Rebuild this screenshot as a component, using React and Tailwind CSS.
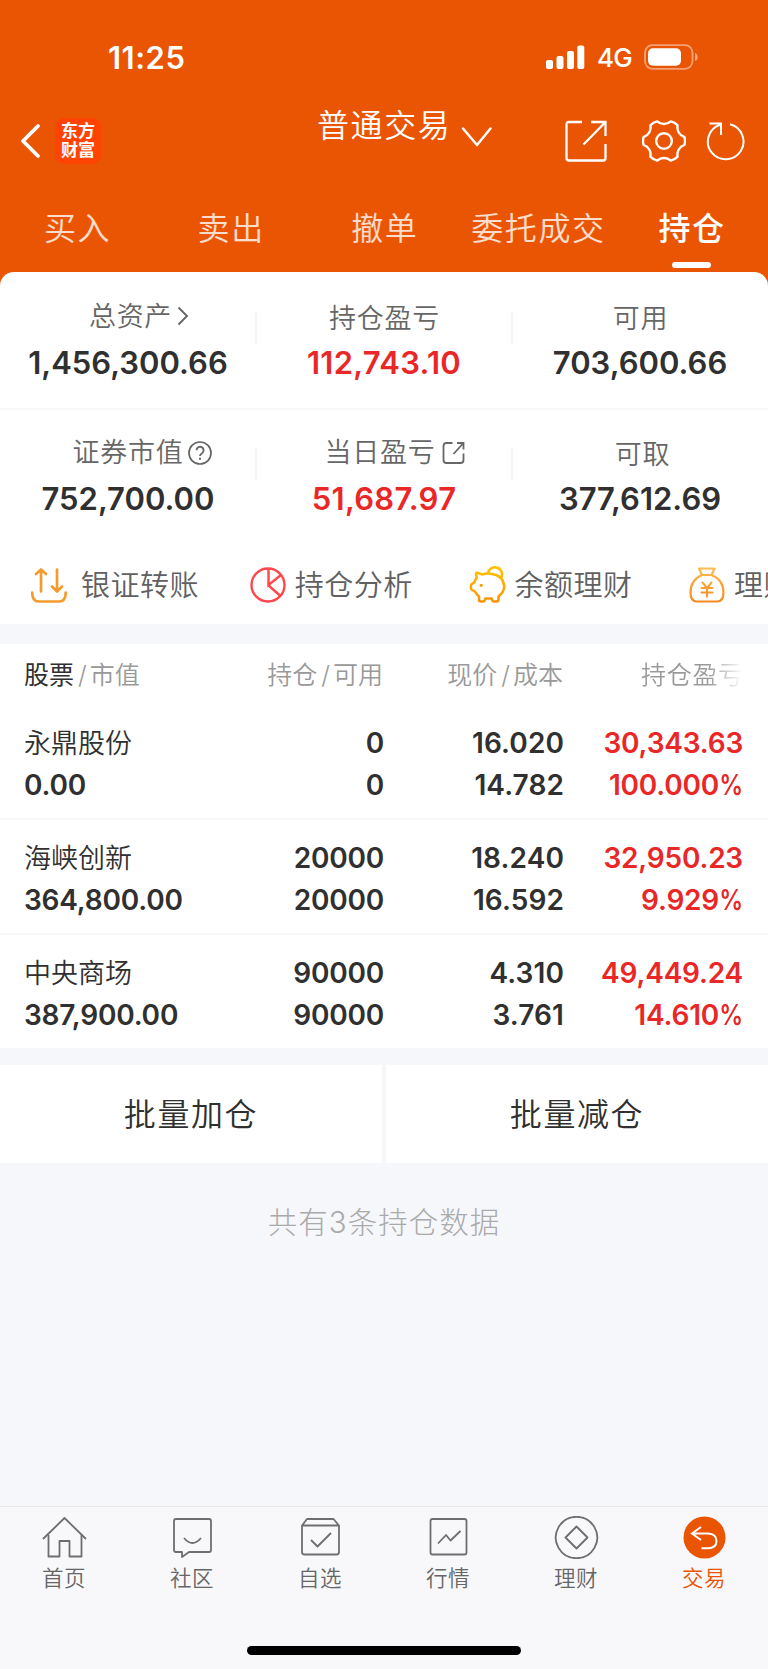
import React from 'react';
import clsx from 'clsx';

const tabs = ['买入', '卖出', '撤单', '委托成交', '持仓'];

const holdings = [
    { name: '永鼎股份', value: '0.00', amount: '0', available: '0', price: '16.020', cost: '14.782', profit: '30,343.63', rate: '100.000' },
    { name: '海峡创新', value: '364,800.00', amount: '20000', available: '20000', price: '18.240', cost: '16.592', profit: '32,950.23', rate: '9.929' },
    { name: '中央商场', value: '387,900.00', amount: '90000', available: '90000', price: '4.310', cost: '3.761', profit: '49,449.24', rate: '14.610' },
];

// Six-tooth gear outline around the origin
const gearPath = (() => {
    const at = (r, deg) => {
        const a = (deg * Math.PI) / 180;
        return `${(r * Math.cos(a)).toFixed(2)} ${(r * Math.sin(a)).toFixed(2)}`;
    };
    let d = `M${at(20.8, -11)}`;
    for (let a = 0; a < 360; a += 60) {
        d += `Q${at(21.6, a)} ${at(20.8, a + 11)}C${at(16.4, a + 20)} ${at(16.4, a + 40)} ${at(20.8, a + 49)}`;
    }
    return `${d}Z`;
})();

const StatusBar = () => (
    <div className="flex h-[114px] items-center pl-[108px] pr-[69px] text-white">
        <span className="text-[31px] leading-none font-semibold tracking-[0.5px]">11:25</span>
        <svg className="ml-auto" width="39" height="24" viewBox="0 0 39 24" fill="currentColor">
            <rect x="0" y="15" width="7" height="9" rx="2" />
            <rect x="10.5" y="11" width="7" height="13" rx="2" />
            <rect x="21" y="6" width="7" height="18" rx="2" />
            <rect x="31.3" y="0.5" width="7" height="23.5" rx="2" />
        </svg>
        <span className="mt-[2px] ml-[12px] w-[35px] text-[26px] leading-none font-[450] tracking-[-0.8px]">4G</span>
        <svg className="ml-[12px]" width="55" height="26" viewBox="0 0 55 26" fill="none">
            <rect x="1" y="1.2" width="47.5" height="23.6" rx="7.5" stroke="#fff" strokeOpacity="0.45" strokeWidth="1.8" />
            <rect x="4" y="4.3" width="33" height="17.4" rx="5" fill="#fff" />
            <path d="M51 9c3.5 1 3.5 7 0 8z" fill="#fff" fillOpacity="0.5" />
        </svg>
    </div>
);

const TitleBar = () => (
    <div className="flex h-[54px] items-center pl-[20px] pr-[22px] text-white">
        <svg width="21" height="36" viewBox="0 0 21 36" fill="none" stroke="currentColor" strokeWidth="3.8" strokeLinecap="round" strokeLinejoin="round">
            <path d="M18 3 3 18l15 15" />
        </svg>
        <div className="ml-[14px] flex h-[46px] w-[46px] flex-col items-center justify-center rounded-[9px] bg-[#ff4305] text-[17px] leading-[19px] font-bold">
            <span>东方</span>
            <span>财富</span>
        </div>
        <div className="ml-[216px] flex items-start self-start">
            <span className="mt-px text-[32px] leading-[21px] font-[350] tracking-[1.6px] whitespace-nowrap">普通交易</span>
            <svg className="mt-[12px] ml-[10px]" width="32" height="22" viewBox="0 0 32 22" fill="none" stroke="currentColor" strokeWidth="2.5" strokeLinecap="round" strokeLinejoin="round">
                <path d="m2 2.5 14 16.5L29.5 2.5" />
            </svg>
        </div>
        <svg className="ml-auto" width="42" height="44" viewBox="0 0 42 44" fill="none" stroke="currentColor" strokeWidth="2.3">
            <path d="M17 3H4Q1.5 3 1.5 5.500v33.500q0 2.500 2.500 2.500h34.500q2 0 2-2.500V25" />
            <path d="M26 3h14.500v14M40 3.500 18.500 25.500" />
        </svg>
        <svg className="ml-[35px]" width="44" height="44" viewBox="-22 -22 44 44" fill="none" stroke="currentColor" strokeWidth="2.400" strokeLinejoin="round">
            <path d={gearPath} />
            <circle r="7.800" />
        </svg>
        <svg className="ml-[20px]" width="40" height="42" viewBox="0 0 40 42" fill="none" stroke="currentColor" strokeWidth="2">
            <path d="M24 4.300A17.800 17.800 0 1 1 14 4.700M3.500 3.500h11.500v11.500" />
        </svg>
    </div>
);

const TabBar = () => (
    <div className="grid h-[104px] grid-cols-5 pt-[41px] text-center">
        {tabs.map((tab, i) => {
            const active = i === tabs.length - 1;
            return (
                <div key={tab} className="flex flex-col items-center">
                    <span className={clsx('-mr-[1.6px] text-[32px] leading-[40px] tracking-[1.6px] whitespace-nowrap', active ? 'font-medium text-white' : 'font-[350] text-white/80')}>
                        {tab}
                    </span>
                    {active && <span className="mt-[13px] h-[6px] w-[39px] rounded-full bg-white" />}
                </div>
            );
        })}
    </div>
);

const Metric = ({ label, icon, value, className, red }) => (
    <div className="flex flex-1 flex-col items-center">
        <div className={clsx('flex h-[45px] items-start gap-[5px] text-[27px] leading-[34px] font-[350] tracking-[0.7px] text-[#666]', className)}>
            <span>{label}</span>
            {icon}
        </div>
        <span className={clsx('text-[31px] leading-[36px] font-semibold', red ? 'tracking-[0.3px] text-[#e92727]' : 'text-[#303030]')}>{value}</span>
    </div>
);

const Summary = () => (
    <div>
        <div className="flex h-[138px] border-b-2 border-[#f7f7f9] pt-[28px]">
            <Metric
                label="总资产"
                value="1,456,300.66"
                className="pl-[22px]"
                icon={
                    <svg className="mt-[6px]" width="12" height="20" viewBox="0 0 12 20" fill="none" stroke="currentColor" strokeWidth="1.900">
                        <path d="m1.500 1.500 8.500 8.500-8.500 8.500" />
                    </svg>
                }
            />
            <div className="-mx-px mt-[11px] h-[34px] w-[2px] bg-[#f6f6f8]" />
            <Metric label="持仓盈亏" value="112,743.10" red className="pt-[2px] pl-px" />
            <div className="-mx-px mt-[11px] h-[34px] w-[2px] bg-[#f6f6f8]" />
            <Metric label="可用" value="703,600.66" className="pt-[2px] pl-px" />
        </div>
        <div className="flex h-[135px] pt-[27px]">
            <Metric
                label="证券市值"
                value="752,700.00"
                className="-mt-px pl-[29px]"
                icon={
                    <svg className="mt-[5px]" width="24" height="24" viewBox="0 0 24 24" fill="none" stroke="currentColor" strokeWidth="1.700">
                        <circle cx="12" cy="12" r="11" />
                        <path d="M8.600 9.300a3.500 3.500 0 1 1 5.400 2.900c-1.300.8-2 1.400-2 2.800M12 16.800v2" strokeWidth="1.900" />
                    </svg>
                }
            />
            <div className="-mx-px mt-[11px] h-[33px] w-[2px] bg-[#f6f6f8]" />
            <Metric
                label="当日盈亏"
                value="51,687.97"
                red
                className="-mt-px pl-[23px]"
                icon={
                    <svg className="mt-[5px] ml-[2px]" width="24" height="24" viewBox="0 0 24 24" fill="none" stroke="currentColor" strokeWidth="1.800">
                        <path d="M10.500 2H4.500Q1.500 2 1.500 5v14q0 3 3 3h14q3 0 3-3v-6.500" />
                        <path d="M15 2h6.500v6.500M21 2.500 11.500 13" />
                    </svg>
                }
            />
            <div className="-mx-px mt-[11px] h-[33px] w-[2px] bg-[#f6f6f8]" />
            <Metric label="可取" value="377,612.69" className="-mt-px pt-[2px] pl-[5px]" />
        </div>
    </div>
);

const TransferIcon = () => (
    <svg className="mr-[14px]" width="38" height="38" viewBox="0 0 38 38" fill="none" stroke="#f39c2d" strokeWidth="2.700" strokeLinecap="round" strokeLinejoin="round">
        <path d="M12 25.500V3.500M7 8l5-4.500L17 8M28 3.500v22M23 20.500l5 5 5-5" />
        <path d="M3.200 26.500q0 9 6.500 9h20.500q6.500 0 6.500-9" />
    </svg>
);

const PieIcon = () => (
    <svg className="mr-[8px]" width="38" height="38" viewBox="0 0 38 38" fill="none" stroke="#ff474c" strokeWidth="2.400">
        <circle cx="19" cy="19" r="16.500" />
        <path d="M19.500 2.500V19L32 9M19 19l12.500 11" />
    </svg>
);

const PigIcon = () => (
    <svg className="mr-[8px]" width="38" height="38" viewBox="0 0 38 38" fill="none" stroke="url(#pig)" strokeWidth="2.500" strokeLinejoin="round">
        <defs>
            <linearGradient id="pig" x1="0" y1="0" x2="0" y2="38" gradientUnits="userSpaceOnUse">
                <stop stopColor="#ffc400" />
                <stop offset="1" stopColor="#f99000" />
            </linearGradient>
        </defs>
        <path d="M14.500 8.500 9 6.800Q7.700 6.500 8 8L8.700 12Q7 14 6.200 16.500L4 17.800Q3 18.300 3 19.300v3q0 1.200 1 1.700L7 25.500Q8.500 28.500 11 30.500V33.500q0 2 2 2h2q1.500 0 2-2l.3-1h6.400l.3 1q.5 2 2 2h2.500q2 0 2-2v-3Q36.200 26 36.200 20.500 35.500 9.500 23 7.700 17.500 7 14.500 8.500Z" />
        <path d="M20 7.600a7 7 0 1 1 12.700 4.700" />
        <circle cx="13.200" cy="19.300" r="1.600" fill="#f99f00" stroke="none" />
    </svg>
);

const MoneyBagIcon = () => (
    <svg className="mr-[8px]" width="38" height="38" viewBox="0 0 38 38" fill="none" stroke="url(#bag)" strokeWidth="2.200" strokeLinecap="round" strokeLinejoin="round">
        <defs>
            <linearGradient id="bag" x1="0" y1="0" x2="0" y2="38" gradientUnits="userSpaceOnUse">
                <stop stopColor="#ffbf55" />
                <stop offset="1" stopColor="#f5851c" />
            </linearGradient>
        </defs>
        <path d="M11 2.500h15.500L23.500 9h-9.500ZM14 9C7 12 2.500 18 2.500 26.500q0 9 6.500 9h20q6.500 0 6.500-9C35.500 18 31 12 23.500 9" />
        <path d="m14.500 16.500 4.500 5.500 4.500-5.500M13.500 22h11M13.500 26.500h11M19 22v8.500" strokeWidth="2" />
    </svg>
);

const shortcuts = [
    { label: '银证转账', Icon: TransferIcon },
    { label: '持仓分析', Icon: PieIcon },
    { label: '余额理财', Icon: PigIcon },
    { label: '理财', Icon: MoneyBagIcon },
];

const Shortcuts = () => (
    <div className="flex h-[79px] items-center overflow-hidden pl-[29px]">
        {shortcuts.map(({ label, Icon }) => (
            <div key={label} className="flex w-[219.7px] shrink-0 items-center">
                <Icon />
                <span className="mt-[3px] text-[29px] leading-[40px] font-[350] tracking-[0.5px] whitespace-nowrap text-[#606060]">{label}</span>
            </div>
        ))}
    </div>
);

const Slash = () => <span className="mr-[3px] ml-[4px]">/</span>;

const HoldingsTable = () => (
    <div className="bg-white text-[#303030]">
        <div className="grid h-[61px] grid-cols-[180px_180px_180px_179px] pl-[24px] text-right text-[25px] leading-[63px] font-[350] text-[#999]">
            <span className="text-left"><span className="font-normal text-[#303030]">股票</span><Slash />市值</span>
            <span className="pr-px">持仓<Slash />可用</span>
            <span className="pr-px">现价<Slash />成本</span>
            <span className="overflow-hidden bg-linear-to-r from-[#999] from-80% to-white bg-clip-text pl-[77px] text-left tracking-[0.7px] whitespace-nowrap text-transparent">持仓盈亏</span>
        </div>
        {holdings.map((h) => (
            <div key={h.name} className="grid h-[115px] grid-cols-[180px_180px_180px_179px] grid-rows-[36px_48px] border-b-2 border-[#f7f7f9] pt-[20px] pl-[24px] text-right text-[28px] font-semibold tracking-[-0.2px]">
                <span className="text-left text-[27px] leading-[38px] font-[350] tracking-normal">{h.name}</span>
                <span className="leading-[36px]">{h.amount}</span>
                <span className="leading-[36px] tracking-[0.1px]">{h.price}</span>
                <span className="leading-[36px] text-[#e92727]">{h.profit}</span>
                <span className="text-left leading-[48px]">{h.value}</span>
                <span className="leading-[48px]">{h.available}</span>
                <span className="leading-[48px] tracking-[0.1px]">{h.cost}</span>
                <span className="leading-[48px] text-[#e92727]">
                    {h.rate}
                    <span className="-ml-[4px] inline-block origin-right scale-x-85">%</span>
                </span>
            </div>
        ))}
    </div>
);

const navItems = [
    { label: '首页', paths: ['M1 23 22.500 2 44 23', 'M6.500 19v21.500h11V25h10v15.500h12V19'] },
    { label: '社区', paths: ['M6 3h33q2 0 2 2v29q0 2-2 2H19l-7 5v-5H6q-2 0-2-2V5q0-2 2-2Z', 'M14 22q8.500 10 17 0'] },
    { label: '自选', paths: ['M4 9.500 9 3h26.500L41 9.500V36q0 2.500-2.500 2.500h-32Q4 38.500 4 36ZM4 9.500h37', 'M13 24l6.500 6.500L33 17'] },
    { label: '行情', paths: ['M6.500 3h32q2 0 2 2v31.500q0 2-2 2h-32q-2 0-2-2V5q0-2 2-2Z', 'M12 27.500l8-8.500 4.500 5.500L34.500 15'] },
    { label: '理财', paths: ['M22.500.8a20.700 20.700 0 1 0 .01 0Z', 'M22.500 10.500 33.500 21.500 22.500 32.500 11.500 21.500Z'] },
];

const BottomNav = () => (
    <nav className="mt-auto h-[163px] border-t border-[#e6e7e8] bg-[#f8f8fb]">
        <div className="grid grid-cols-6 pt-[9px] text-[21.5px] leading-[30px] font-[350] tracking-[0.4px] text-[#666]">
            {navItems.map(({ label, paths }) => (
                <div key={label} className="flex flex-col items-center">
                    <svg width="45" height="43" viewBox="0 0 45 43" fill="none" stroke="#6e6e6e" strokeWidth="1.800" strokeLinejoin="round">
                        {paths.map((d) => <path key={d} d={d} />)}
                    </svg>
                    <span className="mt-[4px]">{label}</span>
                </div>
            ))}
            <div className="flex flex-col items-center text-[#ea5504]">
                <svg width="45" height="43" viewBox="0 0 45 43" fill="none">
                    <circle cx="22.500" cy="21.500" r="21" fill="#ea5504" />
                    <path d="M10.500 17.500H26q8.500.5 8.500 7.500T26 32.300h-6.500M19 11l-9 6.500 9 6.500" stroke="#fff" strokeWidth="2" />
                </svg>
                <span className="mt-[4px]">交易</span>
            </div>
        </div>
        <div className="mx-auto mt-[53px] h-[9px] w-[274px] rounded-full bg-black" />
    </nav>
);

const App = () => (
    <div className="flex h-[1669px] w-[768px] flex-col overflow-hidden bg-[#f6f7fa] font-['Inter','Noto_Sans_CJK_SC',sans-serif]">
        <header className="bg-[#ea5504]">
            <StatusBar />
            <TitleBar />
            <TabBar />
        </header>
        <section className="bg-[#ea5504]">
            <div className="rounded-t-[14px] bg-white">
                <Summary />
                <Shortcuts />
            </div>
        </section>
        <section className="mt-[20px]">
            <HoldingsTable />
        </section>
        <div className="mt-[15px] grid h-[98px] grid-cols-2 gap-[4px] text-center text-[32px] leading-[96px] font-[350] tracking-[1.6px] text-[#303030]">
            <button className="bg-white pt-[2px]">批量加仓</button>
            <button className="bg-white pt-[2px]">批量减仓</button>
        </div>
        <p className="mt-[38px] text-center text-[29.500px] leading-[42px] font-light tracking-[1px] text-[#aaa]">共有3条持仓数据</p>
        <BottomNav />
    </div>
);

export default App;
